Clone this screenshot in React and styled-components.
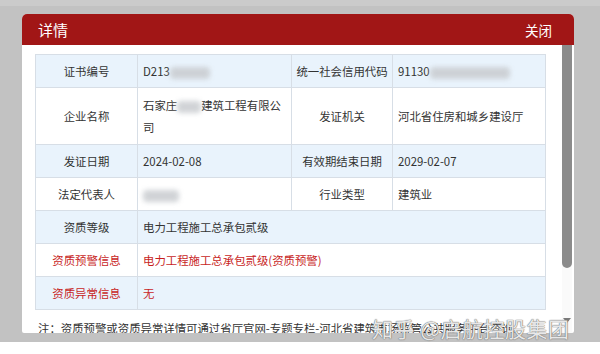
import React from "react";
import styled, { createGlobalStyle } from "styled-components";

const GlobalStyle = createGlobalStyle`
  html, body {
    margin: 0;
    padding: 0;
    background: #fff;
    font-family: "Noto Sans CJK SC", "Noto Sans", sans-serif;
  }
`;

const Page = styled.div`
  width: 600px;
  height: 354px;
  display: flex;
  flex-direction: column;
  overflow: hidden;
  position: relative;
`;

const Backdrop = styled.div`
  height: 342px;
  background: #c2c2c2;
  box-sizing: border-box;
  border-top: 6px solid #cbcbcb;
  padding: 8px 0 0 22px;
`;

const Dialog = styled.div`
  width: 552px;
  height: 319px;
  background: #fff;
  border-radius: 5px 5px 2px 2px;
  overflow: hidden;
  display: flex;
  flex-direction: column;
`;

const Header = styled.div`
  height: 31px;
  flex: none;
  background: #a11616;
  color: #fff;
  display: flex;
  align-items: center;
  justify-content: space-between;
  padding: 0 22px 0 16px;
`;

const Title = styled.span`
  font-size: 15px;
`;

const Close = styled.span`
  font-size: 13.5px;
  cursor: pointer;
`;

const Body = styled.div`
  flex: 1;
  min-height: 0;
  display: flex;
`;

const Content = styled.div`
  flex: 1;
  overflow: hidden;
  padding: 9px 17px 0 13px;
`;

const Track = styled.div`
  width: 10px;
  margin-right: 2px;
  background: #fafafa;
  display: flex;
  flex-direction: column;
  justify-content: space-between;
  align-items: center;
`;

const Thumb = styled.div`
  width: 10px;
  height: 223px;
  background: #8b8b8b;
  border-radius: 0 0 5px 5px;
`;

const ArrowDown = styled.div`
  margin-bottom: 10px;
  width: 0;
  height: 0;
  border-left: 4px solid transparent;
  border-right: 4px solid transparent;
  border-top: 5px solid #7a7a7a;
`;

const Table = styled.table`
  width: 510px;
  border-collapse: collapse;
  table-layout: fixed;
  font-size: 11.4px;
  color: #333;
`;

const Row = styled.tr`
  background: ${(p) => (p.$shade ? "#e9f3fc" : "#fff")};
  height: ${(p) => p.$h || 33}px;
`;

const Label = styled.td`
  border: 1px solid #d7dee6;
  text-align: center;
  padding: 0 4px;
  color: ${(p) => (p.$warn ? "#c81e1e" : "#333")};
`;

const Value = styled.td`
  border: 1px solid #d7dee6;
  padding: 0 10px 0 5px;
  line-height: 22px;
  color: ${(p) => (p.$warn ? "#c81e1e" : "#333")};
`;

const Blur = styled.span`
  display: inline-block;
  vertical-align: middle;
  width: ${(p) => p.$w}px;
  height: 12px;
  background: #c9ccd0;
  filter: blur(2.5px);
  opacity: 0.85;
  border-radius: 4px;
`;

const Note = styled.div`
  margin-top: 10px;
  padding-left: 3px;
  font-size: 11.4px;
  color: #333;
  white-space: nowrap;
`;

const Watermark = styled.div`
  position: absolute;
  left: 372px;
  top: 313px;
  font-size: 21px;
  color: rgba(255, 255, 255, 0.85);
  text-shadow: 0 0 1px #666, 0 0 1px #666;
  white-space: nowrap;
  letter-spacing: 0.5px;
`;

export default function App() {
  return (
    <Page>
      <GlobalStyle />
      <Backdrop>
        <Dialog>
          <Header>
            <Title>详情</Title>
            <Close>关闭</Close>
          </Header>
          <Body>
            <Content>
              <Table>
                <colgroup>
                  <col style={{ width: 102 }} />
                  <col style={{ width: 154 }} />
                  <col style={{ width: 101 }} />
                  <col style={{ width: 153 }} />
                </colgroup>
                <tbody>
                  <Row $shade>
                    <Label>证书编号</Label>
                    <Value>
                      D213<Blur $w={40} />
                    </Value>
                    <Label>统一社会信用代码</Label>
                    <Value>
                      91130<Blur $w={80} />
                    </Value>
                  </Row>
                  <Row $h={57}>
                    <Label>企业名称</Label>
                    <Value>
                      石家庄<Blur $w={24} />建筑工程有限公
                      <br />司
                    </Value>
                    <Label>发证机关</Label>
                    <Value>河北省住房和城乡建设厅</Value>
                  </Row>
                  <Row $shade>
                    <Label>发证日期</Label>
                    <Value>2024-02-08</Value>
                    <Label>有效期结束日期</Label>
                    <Value>2029-02-07</Value>
                  </Row>
                  <Row>
                    <Label>法定代表人</Label>
                    <Value>
                      <Blur $w={36} />
                    </Value>
                    <Label>行业类型</Label>
                    <Value>建筑业</Value>
                  </Row>
                  <Row $shade>
                    <Label>资质等级</Label>
                    <Value colSpan={3}>电力工程施工总承包贰级</Value>
                  </Row>
                  <Row>
                    <Label $warn>资质预警信息</Label>
                    <Value colSpan={3} $warn>
                      电力工程施工总承包贰级(资质预警)
                    </Value>
                  </Row>
                  <Row $shade>
                    <Label $warn>资质异常信息</Label>
                    <Value colSpan={3} $warn>
                      无
                    </Value>
                  </Row>
                </tbody>
              </Table>
              <Note>
                注：资质预警或资质异常详情可通过省厅官网-专题专栏-河北省建筑市场监管公共服务平台查询。
              </Note>
            </Content>
            <Track>
              <Thumb />
              <ArrowDown />
            </Track>
          </Body>
        </Dialog>
      </Backdrop>
      <Watermark>知乎 @启航控股集团</Watermark>
    </Page>
  );
}
